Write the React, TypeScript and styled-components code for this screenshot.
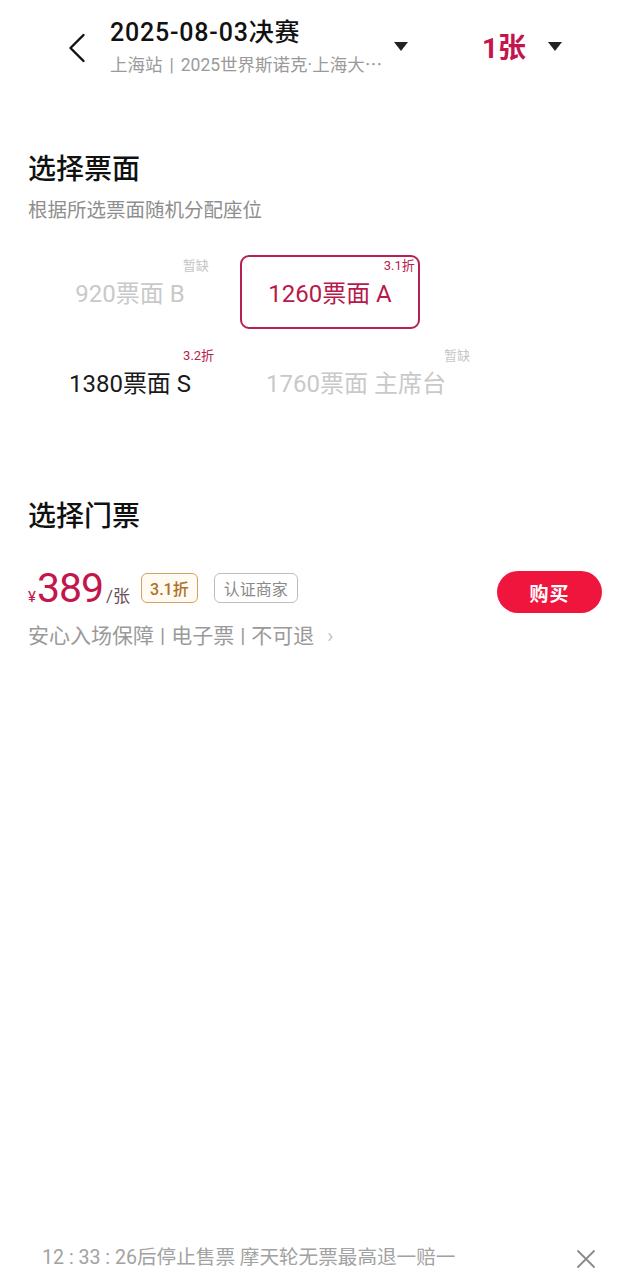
import React from "react";
import styled, { createGlobalStyle } from "styled-components";

const Global = createGlobalStyle`
  html, body { margin: 0; padding: 0; background: #fff; }
  body { font-family: Roboto, "Noto Sans CJK SC", sans-serif; color: #111; }
  * { box-sizing: border-box; }
`;

const CRIMSON = "#c3164c";

const Page = styled.div`
  width: 630px;
  min-height: 1276px;
  display: flex;
  flex-direction: column;
`;

const Header = styled.header`
  display: flex;
  align-items: center;
  padding: 18px 68px 0 68px;
  height: 75px;
`;

const BackButton = styled.div`
  width: 18px;
  height: 30px;
  display: flex;
  margin-right: 24px;
  margin-top: 2px;
`;

const TitleBlock = styled.div`
  width: 282px;
  display: flex;
  flex-direction: column;
`;

const Title = styled.div`
  font-size: 25px;
  line-height: 30px;
  font-weight: 500;
  letter-spacing: 0.8px;
  color: #111;
`;

const SubTitle = styled.div`
  font-size: 17.5px;
  line-height: 22px;
  margin-top: 5px;
  color: #9a9a9a;
  white-space: nowrap;
`;

const SubSep = styled.span`
  margin: 0 7px;
`;

const Ellipsis = styled.span`
  font-family: "Noto Sans CJK SC", sans-serif;
`;

const Caret = styled.span<{ $ml?: number }>`
  width: 0;
  height: 0;
  border-left: 7.5px solid transparent;
  border-right: 7.5px solid transparent;
  border-top: 9px solid #222;
  margin-left: ${(p) => p.$ml ?? 0}px;
`;

const Count = styled.div`
  margin-left: auto;
  margin-right: 22px;
  font-size: 28px;
  line-height: 34px;
  font-weight: 700;
  color: ${CRIMSON};
  margin-top: 4px;
`;

const Main = styled.main`
  padding: 0 28px;
`;

const Section = styled.section<{ $mt: number }>`
  margin-top: ${(p) => p.$mt}px;
`;

const Heading = styled.h2`
  margin: 0;
  font-size: 28px;
  line-height: 36px;
  font-weight: 500;
  color: #111;
`;

const Hint = styled.p`
  margin: 10px 0 0;
  font-size: 19.5px;
  line-height: 26px;
  color: #8e8e8e;
`;

const OptionGrid = styled.div`
  margin: 31px 0 0 12px;
  display: grid;
  grid-template-columns: 180px 180px;
  column-gap: 20px;
  row-gap: 16px;
`;

const OptionCard = styled.div<{ $selected?: boolean }>`
  height: 74px;
  border: 2px solid ${(p) => (p.$selected ? "#b8204d" : "transparent")};
  border-radius: 9px;
  padding: 0 24px;
  display: flex;
  align-items: center;
  justify-content: safe center;
  white-space: nowrap;
`;

const OptionText = styled.span<{ $tone: "off" | "on" | "sel" }>`
  position: relative;
  font-size: 24px;
  line-height: 24px;
  padding-top: 4px;
  color: ${(p) => (p.$tone === "off" ? "#c9c9c9" : p.$tone === "sel" ? "#b8194b" : "#1a1a1a")};
`;

const Badge = styled.span<{ $muted?: boolean }>`
  position: absolute;
  left: calc(100% - ${(p) => (p.$muted ? 2 : 8)}px);
  bottom: calc(100% + 6px);
  font-size: 13px;
  line-height: 13px;
  white-space: nowrap;
  color: ${(p) => (p.$muted ? "#c6c6c6" : "#b8204d")};
`;

const TicketRow = styled.div`
  margin-top: 31px;
  display: flex;
  justify-content: space-between;
  align-items: flex-start;
`;

const TicketInfo = styled.div`
  display: flex;
  flex-direction: column;
`;

const PriceLine = styled.div`
  display: flex;
  align-items: center;
  height: 44px;
`;

const Price = styled.div`
  display: flex;
  align-items: baseline;
  color: ${CRIMSON};
`;

const Yen = styled.span`
  font-size: 15px;
  margin-right: 1px;
`;

const Amount = styled.span`
  font-size: 41px;
  line-height: 44px;
  letter-spacing: -1px;
  font-weight: 400;
`;

const Unit = styled.span`
  font-size: 17px;
  margin-left: 3px;
  color: #6a5058;
`;

const Tag = styled.span<{ $gold?: boolean }>`
  height: 30px;
  display: inline-flex;
  align-items: center;
  padding: 0 ${(p) => (p.$gold ? 8 : 9)}px;
  margin-left: ${(p) => (p.$gold ? 11 : 16)}px;
  border-radius: 6px;
  font-size: 16px;
  font-weight: ${(p) => (p.$gold ? 500 : 400)};
  border: 1px solid ${(p) => (p.$gold ? "#d6a262" : "#bdbdbd")};
  color: ${(p) => (p.$gold ? "#b0702a" : "#8a8a8a")};
  background: ${(p) => (p.$gold ? "#fffaf2" : "#fff")};
`;

const Perks = styled.div`
  margin-top: 12px;
  font-size: 21px;
  line-height: 28px;
  color: #9a9a9a;
  display: flex;
  align-items: center;
`;

const Sep = styled.span`
  margin: 0 6px;
`;

const Chevron = styled.span`
  margin-left: 13px;
  font-size: 20px;
  color: #c4c4c4;
`;

const BuyButton = styled.button`
  margin-top: 5px;
  width: 105px;
  height: 42px;
  border: none;
  border-radius: 21px;
  background: #f0153c;
  color: #fff;
  font-family: inherit;
  font-size: 19px;
  font-weight: 700;
  letter-spacing: 1px;
`;

const Footer = styled.footer`
  margin-top: auto;
  height: 31px;
  padding: 0 34px 0 42px;
  display: flex;
  align-items: flex-start;
  justify-content: space-between;
`;

const FooterText = styled.span`
  font-size: 19.6px;
  line-height: 26px;
  color: #a2a2a2;
`;

const CloseIcon = styled.div`
  width: 20px;
  height: 20px;
  margin-top: 4px;
  display: flex;
`;

type Opt = { text: string; tone: "off" | "on" | "sel"; badge: string; muted?: boolean };

const options: Opt[] = [
  { text: "920票面 B", tone: "off", badge: "暂缺", muted: true },
  { text: "1260票面 A", tone: "sel", badge: "3.1折" },
  { text: "1380票面 S", tone: "on", badge: "3.2折" },
  { text: "1760票面 主席台", tone: "off", badge: "暂缺", muted: true },
];

export default function App() {
  return (
    <Page>
      <Global />
      <Header>
        <BackButton>
          <svg width="18" height="30" viewBox="0 0 18 30" fill="none">
            <path d="M15.5 2 L2.5 15 L15.5 28" stroke="#111" strokeWidth="2.4" strokeLinecap="round" strokeLinejoin="round" />
          </svg>
        </BackButton>
        <TitleBlock>
          <Title>2025-08-03决赛</Title>
          <SubTitle>
            上海站<SubSep>|</SubSep>2025世界斯诺克·上海大<Ellipsis>⋯</Ellipsis>
          </SubTitle>
        </TitleBlock>
        <Caret $ml={2} />
        <Count>1张</Count>
        <Caret />
      </Header>
      <Main>
        <Section $mt={77}>
          <Heading>选择票面</Heading>
          <Hint>根据所选票面随机分配座位</Hint>
          <OptionGrid>
            {options.map((o) => (
              <OptionCard key={o.text} $selected={o.tone === "sel"}>
                <OptionText $tone={o.tone}>
                  {o.text}
                  <Badge $muted={o.muted}>{o.badge}</Badge>
                </OptionText>
              </OptionCard>
            ))}
          </OptionGrid>
        </Section>
        <Section $mt={80}>
          <Heading>选择门票</Heading>
          <TicketRow>
            <TicketInfo>
              <PriceLine>
                <Price>
                  <Yen>¥</Yen>
                  <Amount>389</Amount>
                  <Unit>/张</Unit>
                </Price>
                <Tag $gold>3.1折</Tag>
                <Tag>认证商家</Tag>
              </PriceLine>
              <Perks>
                安心入场保障<Sep>|</Sep>电子票<Sep>|</Sep>不可退
                <Chevron>›</Chevron>
              </Perks>
            </TicketInfo>
            <BuyButton>购买</BuyButton>
          </TicketRow>
        </Section>
      </Main>
      <Footer>
        <FooterText>12 : 33 : 26后停止售票 摩天轮无票最高退一赔一</FooterText>
        <CloseIcon>
          <svg width="20" height="20" viewBox="0 0 20 20" fill="none">
            <path d="M2 2 L18 18 M18 2 L2 18" stroke="#8a8a8a" strokeWidth="1.8" strokeLinecap="round" />
          </svg>
        </CloseIcon>
      </Footer>
    </Page>
  );
}
